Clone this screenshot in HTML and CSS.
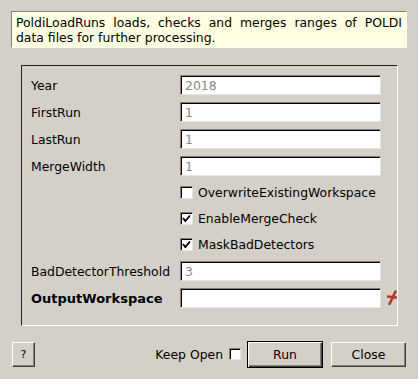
FILE: index.html
```html
<!DOCTYPE html>
<html lang="en">

<head>
    <meta charset="UTF-8">
    <meta name="viewport" content="width=device-width, initial-scale=1.0">
    <title>PoldiLoadRuns</title>
    <link rel="stylesheet" href="styles.css">
</head>

<body>
    <div class="dialog">
        <p class="desc">PoldiLoadRuns loads, checks and merges ranges of POLDI data files for further processing.</p>

        <div class="group">
            <div class="row">
                <span class="label">Year</span>
                <input class="field" type="text" value="2018">
            </div>
            <div class="row">
                <span class="label">FirstRun</span>
                <input class="field" type="text" value="1">
            </div>
            <div class="row">
                <span class="label">LastRun</span>
                <input class="field" type="text" value="1">
            </div>
            <div class="row">
                <span class="label">MergeWidth</span>
                <input class="field" type="text" value="1">
            </div>
            <div class="row check-row">
                <label class="check"><span class="box"></span>OverwriteExistingWorkspace</label>
            </div>
            <div class="row check-row">
                <label class="check"><span class="box"><svg viewBox="0 0 11 11"><polyline points="2,5 4.3,8 9,2.5" /></svg></span>EnableMergeCheck</label>
            </div>
            <div class="row check-row">
                <label class="check"><span class="box"><svg viewBox="0 0 11 11"><polyline points="2,5 4.3,8 9,2.5" /></svg></span>MaskBadDetectors</label>
            </div>
            <div class="row">
                <span class="label">BadDetectorThreshold</span>
                <input class="field" type="text" value="3">
            </div>
            <div class="row">
                <span class="label bold">OutputWorkspace</span>
                <input class="field" type="text" value="">
                <svg class="star" viewBox="0 0 16 16"><path d="M8.5 1.5 L2.5 14" /><path d="M1 6.5 L9 7.5" /></svg>
            </div>
        </div>

        <div class="footer">
            <button class="btn help">?</button>
            <label class="keep">Keep Open <span class="box small"></span></label>
            <button class="btn default">Run</button>
            <button class="btn">Close</button>
        </div>
    </div>
</body>

</html>
```

FILE: styles.css
```css
body {
    margin: 0;
    background-color: #d4d0c8;
    color: #000;
    font-family: "DejaVu Sans", sans-serif;
    font-size: 12.4px;
}

.dialog {
    width: 418px;
    height: 379px;
    overflow: hidden;
}

.desc {
    margin: 11px 11px 0;
    padding: 3px 4px 2px;
    line-height: 15px;
    background-color: #ffffe1;
    border: 1px solid;
    border-color: #808080 #fff #fff #808080;
    text-align: justify;
}

.group {
    margin: 17px 20px 0 21px;
    padding: 9px 0 17px 9px;
    border: 1px solid;
    border-color: #222 #fff #fff #222;
    overflow: hidden;
    display: flex;
    flex-direction: column;
    gap: 7px;
}

.row {
    display: grid;
    grid-template-columns: 149px 201px 16px;
    align-items: center;
    height: 20px;
}

.check-row {
    height: 19px;
}

.label {
    white-space: nowrap;
}

.bold {
    font-weight: bold;
    font-size: 13px;
}

.field {
    box-sizing: border-box;
    width: 201px;
    height: 20px;
    margin: 0;
    padding: 0 3px 0 4px;
    border: 1px solid;
    border-color: #808080 #e6e4e0 #e6e4e0 #808080;
    box-shadow: inset 1px 1px 0 #000;
    background-color: #fff;
    color: #8a8a8a;
    font: inherit;
    outline: none;
}

.check {
    grid-column: 2;
    display: flex;
    align-items: center;
    gap: 5px;
    white-space: nowrap;
}

.box {
    box-sizing: border-box;
    width: 13px;
    height: 13px;
    border: 1px solid;
    border-color: #808080 #e6e4e0 #e6e4e0 #808080;
    box-shadow: inset 1px 1px 0 #000;
    background-color: #fff;
    display: flex;
}

.box svg {
    width: 11px;
    height: 11px;
    fill: none;
    stroke: #000;
    stroke-width: 1.9;
}

.box.small {
    width: 12px;
    height: 12px;
    margin-bottom: 2px;
}

.star {
    width: 16px;
    height: 16px;
    margin-left: 6px;
    fill: none;
    stroke: #b8352c;
    stroke-width: 2.6;
    stroke-linecap: round;
}

.footer {
    display: flex;
    align-items: center;
    margin-top: 15px;
    padding: 0 12px;
}

.btn {
    box-sizing: border-box;
    width: 75px;
    height: 25px;
    margin: 0;
    padding: 0;
    border: 1px solid;
    border-color: #fff #404040 #404040 #fff;
    box-shadow: inset -1px -1px 0 #808080;
    background-color: #d4d0c8;
    color: #000;
    font: inherit;
}

.help {
    width: 23px;
    margin-right: auto;
    font-size: 11px;
}

.keep {
    display: flex;
    align-items: center;
    gap: 6px;
    margin-right: 6px;
}

.default {
    width: 76px;
    height: 27px;
    margin-right: 8px;
    border: 1px solid #000;
    box-shadow: inset 1px 1px 0 #fff, inset -1px -1px 0 #404040, inset -2px -2px 0 #808080;
}
```
